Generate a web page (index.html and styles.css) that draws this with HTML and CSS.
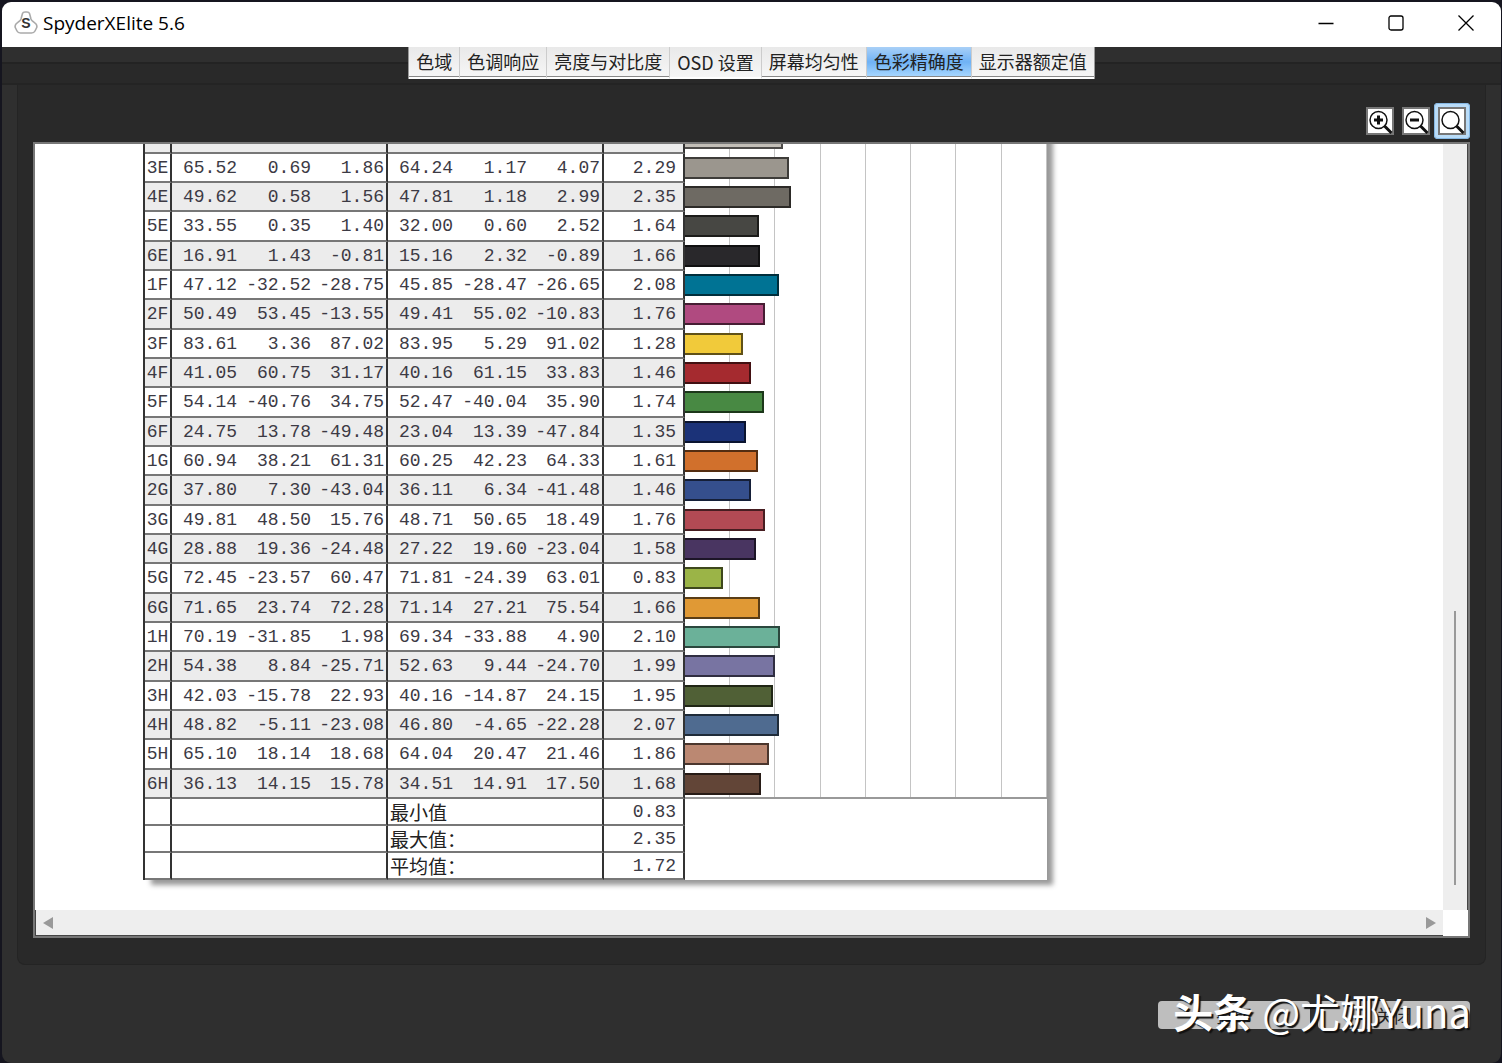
FILE: index.html
```
<!DOCTYPE html>
<html lang="zh-CN">

<head>
  <meta charset="UTF-8" />
  <meta name="viewport" content="width=device-width, initial-scale=1.0" />
  <link rel="stylesheet" href="styles.css">
  <script src="script.js" defer></script>
  <title>SpyderXElite 5.6</title>
</head>

<body>
  <div class="window">
    <header class="titlebar">
      <svg class="app-icon" viewBox="0 0 24 24" width="24" height="24">
        <path d="M8.500 2.500Q9 1 11 1h2Q15 1 15.500 2.500L17 8Q17.500 9.500 19 10.500L22 13Q23.500 15 22.500 17L21 20Q20 22 17.500 22h-11Q4 22 3 20L1.500 17Q0.500 15 2 13L5 10.500Q6.500 9.500 7 8z" fill="#fff" stroke="#aaa" stroke-width="1.600" />
        <text x="12" y="17" text-anchor="middle" class="app-letter">S</text>
      </svg>
      <h1 class="title">SpyderXElite 5.6</h1>
      <div class="window-buttons">
        <button class="window-button" aria-label="最小化">
          <svg viewBox="0 0 16 16" width="16" height="16"><path d="M0.500 8.500h15" /></svg>
        </button>
        <button class="window-button" aria-label="最大化">
          <svg viewBox="0 0 16 16" width="16" height="16"><rect x="1" y="1" width="14" height="14" rx="2" /></svg>
        </button>
        <button class="window-button" aria-label="关闭窗口">
          <svg viewBox="0 0 16 16" width="16" height="16"><path d="M0.500 0.500l15 15M15.500 0.500l-15 15" /></svg>
        </button>
      </div>
    </header>

    <nav class="tab-strip">
      <div class="tabs">
        <button class="tab">色域</button>
        <button class="tab">色调响应</button>
        <button class="tab">亮度与对比度</button>
        <button class="tab raised">OSD 设置</button>
        <button class="tab">屏幕均匀性</button>
        <button class="tab selected">色彩精确度</button>
        <button class="tab">显示器额定值</button>
      </div>
    </nav>

    <main class="panel">
      <div class="toolbar">
        <button class="tool" aria-label="放大">
          <svg viewBox="0 0 28 28" width="28" height="28">
            <rect class="tool-frame" x="1" y="1" width="26" height="26" />
            <circle class="lens" cx="12.500" cy="13" r="8.500" />
            <path class="handle" d="M18.500 19l7 7" />
            <path class="sign" d="M8 13h9M12.500 8.500v9" />
          </svg>
        </button>
        <button class="tool" aria-label="缩小">
          <svg viewBox="0 0 28 28" width="28" height="28">
            <rect class="tool-frame" x="1" y="1" width="26" height="26" />
            <circle class="lens" cx="12.500" cy="13" r="8.500" />
            <path class="handle" d="M18.500 19l7 7" />
            <path class="sign" d="M8 13h9" />
          </svg>
        </button>
        <button class="tool active" aria-label="适合窗口">
          <svg viewBox="0 0 28 28" width="28" height="28">
            <rect class="tool-frame" x="1" y="1" width="26" height="26" />
            <circle class="lens" cx="12.500" cy="13" r="8.500" />
            <path class="handle" d="M18.500 19l7 7" />
          </svg>
        </button>
      </div>

      <div class="viewer">
        <div class="canvas">
          <div class="report">
            <table class="samples">
              <colgroup>
                <col class="col-code">
                <col class="col-first"><col class="col-value"><col class="col-value">
                <col class="col-first"><col class="col-value"><col class="col-value">
                <col class="col-delta">
                <col class="col-chart">
              </colgroup>
              <tbody data-samples></tbody>
              <tfoot>
                <tr><td class="line"></td><td class="line" colspan="3"></td><td class="line label" colspan="3">最小值</td><td class="line delta">0.83</td><td></td></tr>
                <tr><td class="line"></td><td class="line" colspan="3"></td><td class="line label" colspan="3">最大值：</td><td class="line delta">2.35</td><td></td></tr>
                <tr><td class="line"></td><td class="line" colspan="3"></td><td class="line label" colspan="3">平均值：</td><td class="line delta">1.72</td><td></td></tr>
              </tfoot>
            </table>
          </div>
        </div>
        <div class="scroll-y"><div class="thumb"></div></div>
        <div class="scroll-x">
          <svg viewBox="0 0 10 12" width="10" height="12"><path d="M10 0v12L0 6z" /></svg>
          <svg viewBox="0 0 10 12" width="10" height="12"><path d="M0 0v12L10 6z" /></svg>
        </div>
      </div>
    </main>

    <footer class="actions">
      <button class="action">打印</button>
      <button class="action">关闭</button>
      <div class="watermark"><b>头条</b> @尤娜Yuna</div>
    </footer>
  </div>
</body>

</html>
```
FILE: styles.css
```
*,
*::after,
*::before {
  box-sizing: border-box;
}

body {
  margin: 0;
  padding: 2px 1px 0 2px;
  height: 100vh;
  display: flex;
  background-color: #15151f;
  font-family: "Noto Sans", "Noto Sans CJK SC", sans-serif;
}

button {
  border: none;
  margin: 0;
  padding: 0;
  background: none;
  font: inherit;
  color: inherit;
}

.window {
  flex: 1;
  min-width: 0;
  display: flex;
  flex-direction: column;
  border-radius: 9px;
  overflow: hidden;
  background-color: #2f2f2f;
}

/* title bar */

.titlebar {
  flex: none;
  height: 45px;
  display: flex;
  align-items: center;
  padding: 0 0 3px 12px;
  background-color: white;
}

.app-letter {
  font-family: "Liberation Sans", sans-serif;
  font-size: 14px;
  font-weight: bold;
  fill: #333;
}

.title {
  flex: 1;
  margin: 0 0 0 5px;
  font-family: "Open Sans", sans-serif;
  font-size: 19px;
  font-weight: normal;
  color: black;
}

.window-buttons {
  display: flex;
}

.window-button {
  width: 70px;
  height: 42px;
  display: flex;
  align-items: center;
  justify-content: center;
}

.window-button svg {
  fill: none;
  stroke: black;
  stroke-width: 1.3;
}

/* tabs */

.tab-strip {
  flex: none;
  height: 38px;
  display: flex;
  justify-content: center;
  align-items: flex-start;
  background: linear-gradient(#2f2f2f 15px, #232323 15px, #232323 17px, #292929 17px, #292929 36px, #242424 36px);
}

.tabs {
  display: flex;
  align-items: flex-start;
  border-left: 1px solid #999;
  border-right: 1px solid #999;
}

.tab {
  height: 32px;
  padding: 0 7px;
  border-right: 1px solid #ccc;
  border-bottom: 2px solid white;
  box-shadow: inset 0 -1px #888;
  background: linear-gradient(#e9e9e9, #f6f6f6);
  font-family: "Noto Sans CJK SC", sans-serif;
  font-size: 18px;
  line-height: 26px;
  padding-bottom: 2px;
  color: #222;
  white-space: nowrap;
}

.tab:last-child {
  border-right: none;
}

.tab.raised {
  box-shadow: none;
  padding-bottom: 0;
}

.tab.selected {
  background: linear-gradient(#a9d0f7, #6fb2f5 50%, #a9d8ff);
}

/* report panel */

.panel {
  flex: 1;
  min-height: 0;
  margin: 0 15px;
  padding: 18px 15px 26px;
  display: flex;
  flex-direction: column;
  border: 1px solid #242424;
  border-top: none;
  border-radius: 0 0 8px 8px;
  background-color: #292929;
}

.toolbar {
  flex: none;
  display: flex;
  justify-content: flex-end;
  margin-bottom: 3px;
}

.tool {
  width: 36px;
  height: 36px;
  padding: 4px;
  display: flex;
  border-radius: 4px;
}

.tool.active {
  background-color: #b9dcf8;
  box-shadow: inset 0 0 0 1px #86b8e4;
}

.tool-frame {
  fill: white;
  stroke: #777;
  stroke-width: 2;
}

.lens {
  fill: none;
  stroke: #111;
  stroke-width: 1.5;
}

.handle {
  stroke: #111;
  stroke-width: 3;
}

.sign {
  stroke: #111;
  stroke-width: 3;
}

.viewer {
  flex: 1;
  min-height: 0;
  display: grid;
  grid-template-columns: 1fr 25px;
  grid-template-rows: minmax(0, 1fr) 26px;
  border: 2px solid #777;
  background-color: white;
}

.canvas {
  min-width: 0;
  min-height: 0;
  overflow: hidden;
  display: flex;
  align-items: flex-end;
  padding: 0 0 30px 108px;
}

.scroll-y {
  display: flex;
  justify-content: center;
  align-items: flex-end;
  padding-bottom: 25px;
  background-color: #eee;
  border-right: 1px solid #444;
}

.thumb {
  width: 2px;
  height: 37%;
  background-color: #999;
}

.scroll-x {
  display: flex;
  justify-content: space-between;
  align-items: center;
  padding: 0 7px;
  background-color: #eee;
  border-left: 1px solid #444;
  border-bottom: 1px solid #444;
}

.scroll-x svg {
  fill: #999;
}

/* sample table */

.report {
  flex: none;
  background-color: white;
  box-shadow: 7px 6px 5px -1px #999;
}

.samples {
  width: 904px;
  table-layout: fixed;
  border-spacing: 0;
  border-left: 2px solid #333;
  font-family: "Liberation Mono", monospace;
  font-size: 18px;
  line-height: 18px;
  color: #3c3a44;
}

.col-code {
  width: 27px;
}

.col-first {
  width: 68px;
}

.col-value {
  width: 74px;
}

.col-delta {
  width: 81px;
}

.samples th,
.samples td {
  height: 29px;
  padding: 0 2px 0 0;
  font-weight: normal;
  text-align: right;
  white-space: nowrap;
}

.samples tbody tr:nth-child(3n+1) > * {
  height: 30px;
}

.samples tfoot td {
  height: 27px;
}

.samples .code {
  padding: 0;
  text-align: center;
}

.samples .number {
  padding-right: 3px;
  border-bottom: 2px solid #777;
}

.samples .line {
  border-right: 2px solid #333;
  border-bottom: 2px solid #777;
}

.samples tbody tr:nth-child(odd) > :not(.chart) {
  background-color: #ececec;
}

.samples .delta {
  padding-right: 7px;
}

.samples .label {
  padding-left: 2px;
  text-align: left;
  font-family: "Noto Sans CJK SC", sans-serif;
  font-size: 19px;
  color: #222;
}

.samples .chart {
  padding: 0;
  vertical-align: top;
  background-image: repeating-linear-gradient(to right, transparent 0, transparent calc(12.5% - 1px), #c4c4c4 calc(12.5% - 1px), #c4c4c4 12.5%);
}

.samples tbody tr:last-child .chart {
  border-bottom: 2px solid #999;
}

.bar {
  height: 22px;
  margin-top: 3px;
  border: 2px solid rgba(0, 0, 0, 0.6);
  border-left: none;
}

/* bottom buttons */

.actions {
  flex: none;
  position: relative;
  height: 98px;
  padding: 36px 31px 0 0;
  display: flex;
  justify-content: flex-end;
  align-items: flex-start;
  gap: 8px;
}

.action {
  width: 152px;
  height: 28px;
  border-radius: 4px;
  background-color: #bebebe;
  font-family: "Noto Sans CJK SC", sans-serif;
  font-size: 18px;
  line-height: 26px;
  color: #222;
}

.watermark {
  position: absolute;
  right: 30px;
  top: 20px;
  font-family: "Noto Sans CJK SC", sans-serif;
  font-size: 40px;
  line-height: 52px;
  color: white;
  text-shadow: 2px 2px 1px #111;
  white-space: nowrap;
}
```
FILE: script.js
```
// code, target L a b, measured L a b, delta E, colour
const SAMPLES = [
  ["2E", "80.61", "1.17", "2.05", "79.16", "1.17", "4.31", "2.17", "#c3bfb8"],
  ["3E", "65.52", "0.69", "1.86", "64.24", "1.17", "4.07", "2.29", "#9b968e"],
  ["4E", "49.62", "0.58", "1.56", "47.81", "1.18", "2.99", "2.35", "#6e6a63"],
  ["5E", "33.55", "0.35", "1.40", "32.00", "0.60", "2.52", "1.64", "#474743"],
  ["6E", "16.91", "1.43", "-0.81", "15.16", "2.32", "-0.89", "1.66", "#29282b"],
  ["1F", "47.12", "-32.52", "-28.75", "45.85", "-28.47", "-26.65", "2.08", "#007394"],
  ["2F", "50.49", "53.45", "-13.55", "49.41", "55.02", "-10.83", "1.76", "#b04a80"],
  ["3F", "83.61", "3.36", "87.02", "83.95", "5.29", "91.02", "1.28", "#f1ca3a"],
  ["4F", "41.05", "60.75", "31.17", "40.16", "61.15", "33.83", "1.46", "#a52a2f"],
  ["5F", "54.14", "-40.76", "34.75", "52.47", "-40.04", "35.90", "1.74", "#488943"],
  ["6F", "24.75", "13.78", "-49.48", "23.04", "13.39", "-47.84", "1.35", "#1b3278"],
  ["1G", "60.94", "38.21", "61.31", "60.25", "42.23", "64.33", "1.61", "#d1702c"],
  ["2G", "37.80", "7.30", "-43.04", "36.11", "6.34", "-41.48", "1.46", "#354f8d"],
  ["3G", "49.81", "48.50", "15.76", "48.71", "50.65", "18.49", "1.76", "#b24a54"],
  ["4G", "28.88", "19.36", "-24.48", "27.22", "19.60", "-23.04", "1.58", "#493561"],
  ["5G", "72.45", "-23.57", "60.47", "71.81", "-24.39", "63.01", "0.83", "#9bb447"],
  ["6G", "71.65", "23.74", "72.28", "71.14", "27.21", "75.54", "1.66", "#e09935"],
  ["1H", "70.19", "-31.85", "1.98", "69.34", "-33.88", "4.90", "2.10", "#6bb199"],
  ["2H", "54.38", "8.84", "-25.71", "52.63", "9.44", "-24.70", "1.99", "#7874a2"],
  ["3H", "42.03", "-15.78", "22.93", "40.16", "-14.87", "24.15", "1.95", "#506036"],
  ["4H", "48.82", "-5.11", "-23.08", "46.80", "-4.65", "-22.28", "2.07", "#4f6b90"],
  ["5H", "65.10", "18.14", "18.68", "64.04", "20.47", "21.46", "1.86", "#bb8872"],
  ["6H", "36.13", "14.15", "15.78", "34.51", "14.91", "17.50", "1.68", "#624537"],
]

// the chart is 8 delta E units wide
const CHART_MAX = 8

const body = document.querySelector("[data-samples]")

SAMPLES.forEach(([code, l1, a1, b1, l2, a2, b2, delta, color]) => {
  const width = (delta / CHART_MAX) * 100
  body.insertAdjacentHTML("beforeend", `
    <tr>
      <th class="code line">${code}</th>
      <td class="number">${l1}</td><td class="number">${a1}</td><td class="line">${b1}</td>
      <td class="number">${l2}</td><td class="number">${a2}</td><td class="line">${b2}</td>
      <td class="line delta">${delta}</td>
      <td class="chart"><div class="bar" style="width: ${width}%; background-color: ${color}"></div></td>
    </tr>`)
})
```
